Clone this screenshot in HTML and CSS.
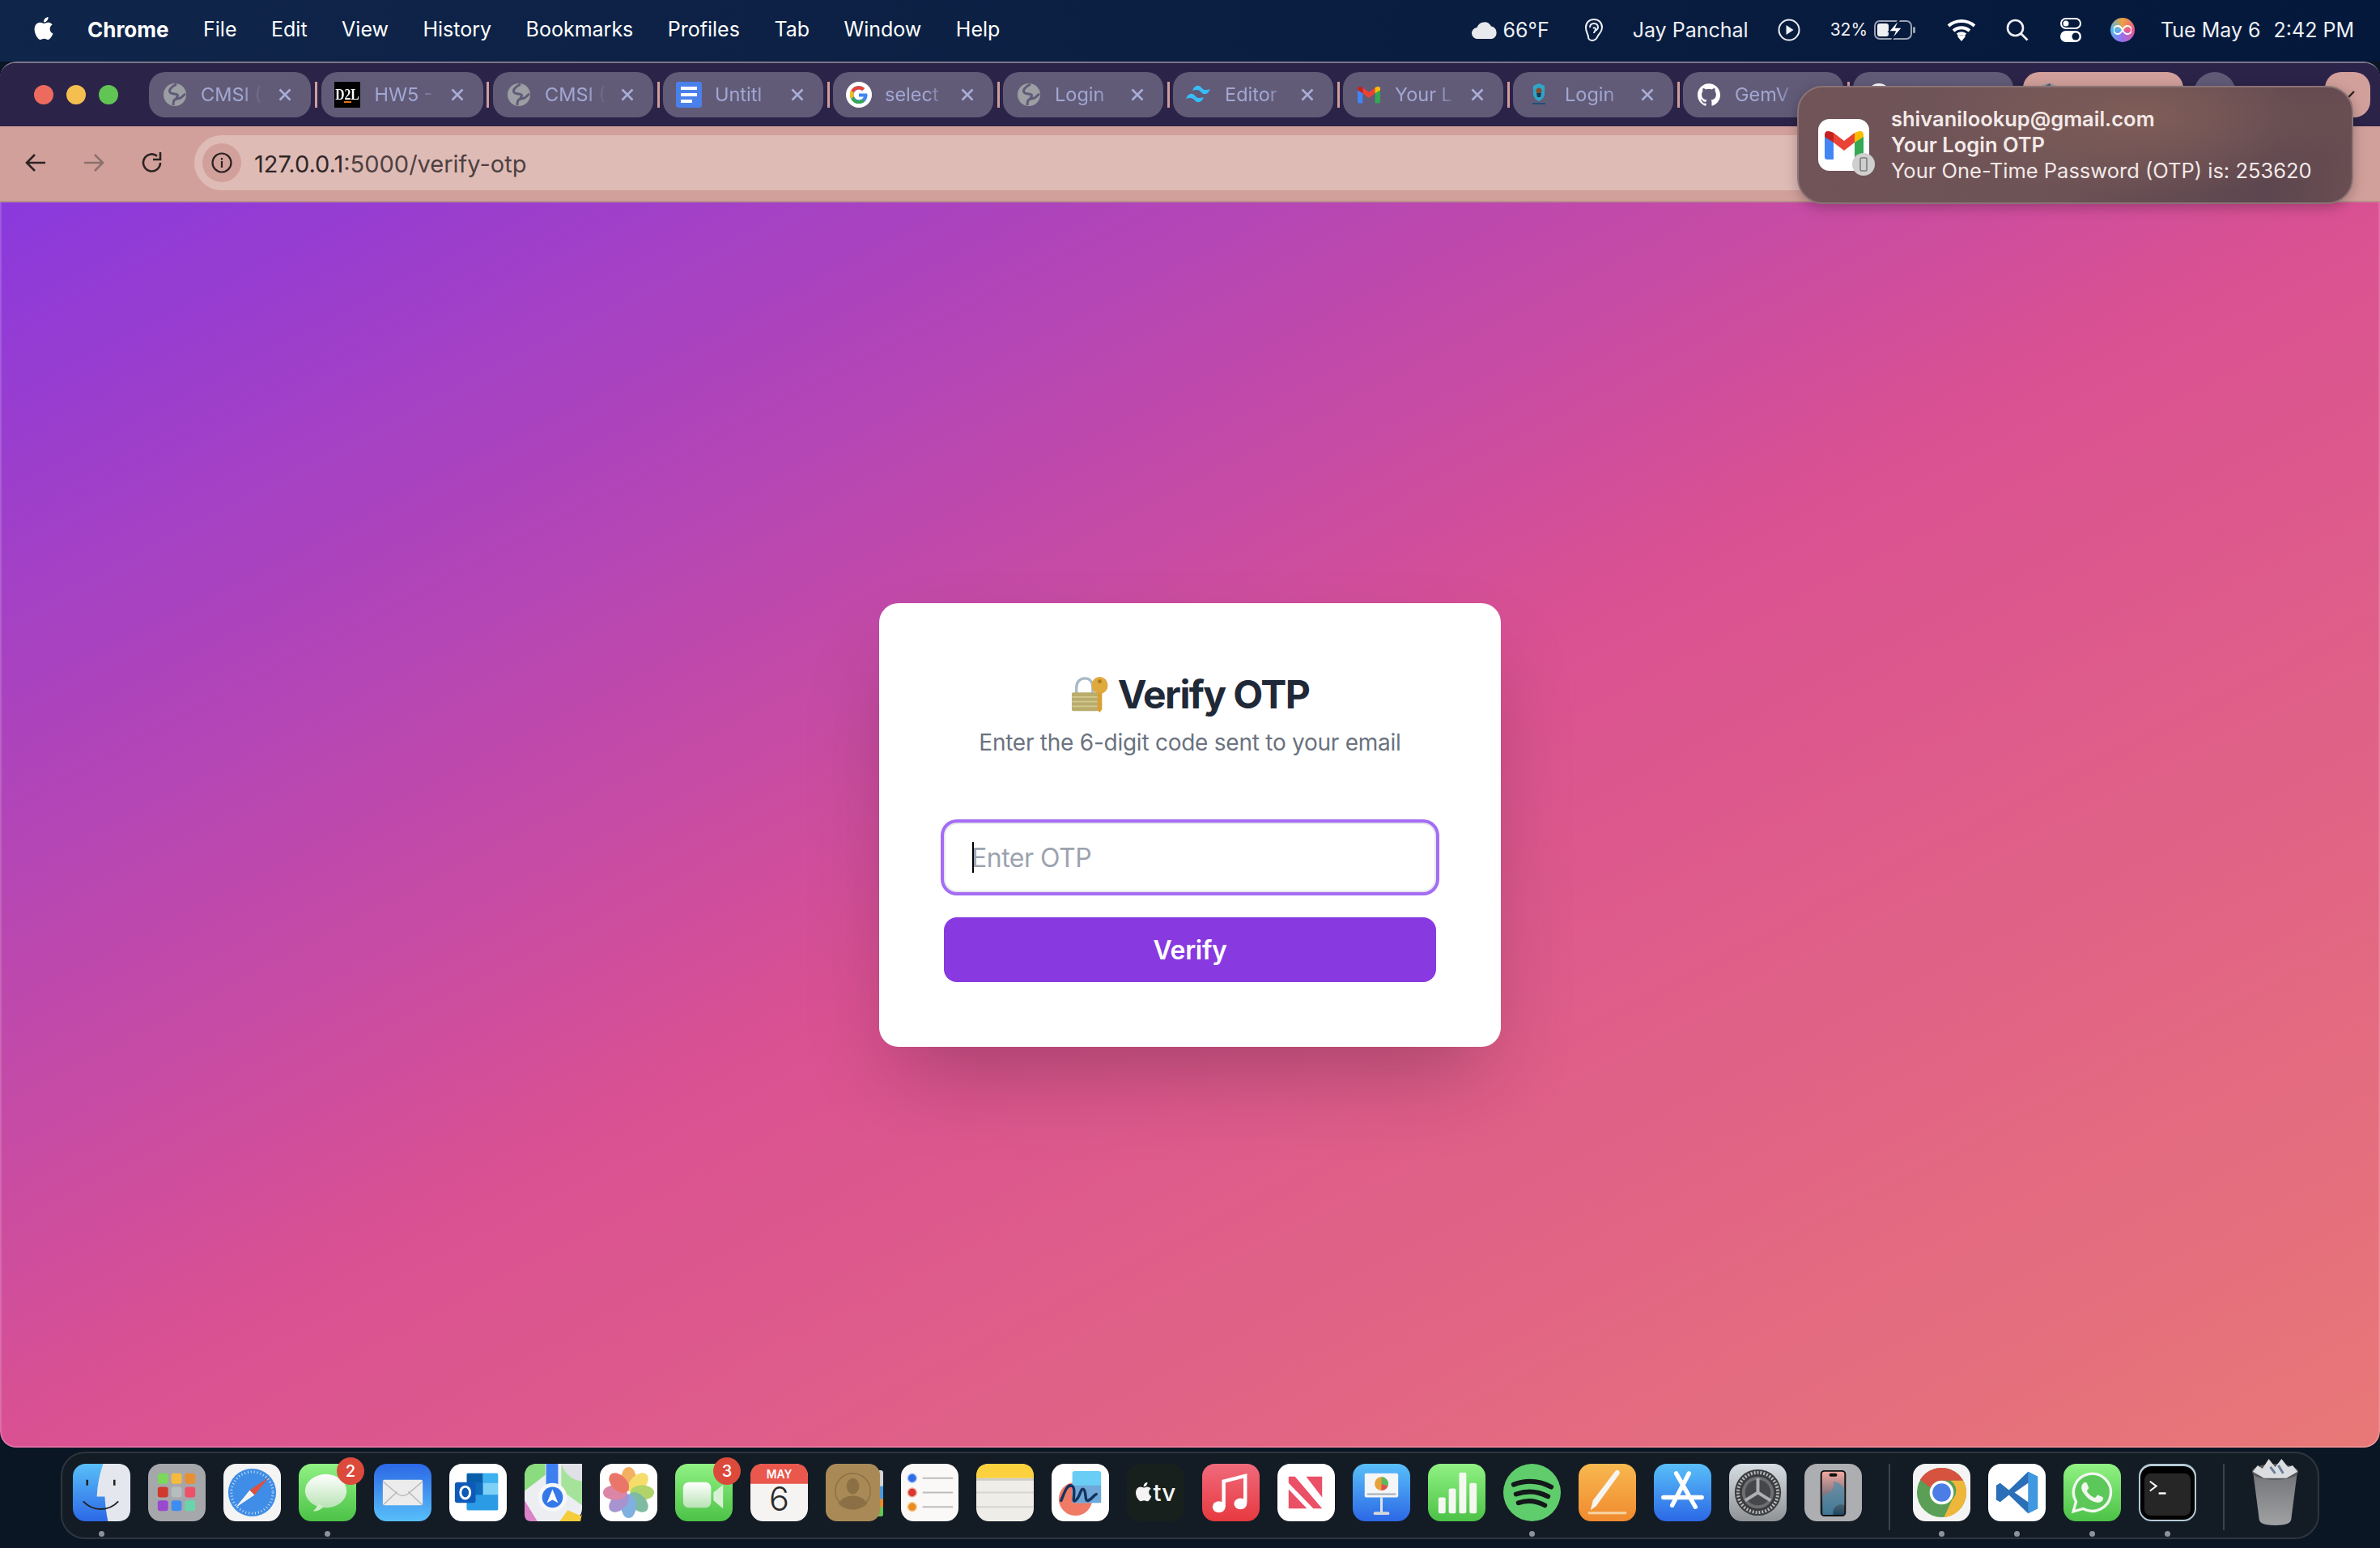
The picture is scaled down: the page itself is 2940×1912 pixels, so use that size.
FILE: index.html
```html
<!DOCTYPE html>
<html lang="en">
<head>
    <meta charset="UTF-8">
    <meta name="viewport" content="width=device-width, initial-scale=1.0">
    <title>Verify OTP</title>
    <link rel="stylesheet" href="styles.css">
</head>
<body>

    <svg class="sprite" aria-hidden="true">
        <symbol id="i-close" viewBox="0 0 16 16"><path d="M1.500 1.500l13 13M14.500 1.500l-13 13" fill="none" stroke="currentColor" stroke-width="2.600"/></symbol>
        <symbol id="i-globe" viewBox="0 0 28 28"><circle cx="14" cy="14" r="14" fill="#9b9ea2"/><path d="M16 1C10 4 6 8 8 11c2 3 7 1 9 3 2 2-2 3-1 5M27 13c-2 1-4 4-6 5-3 1-7 1-8 3-1 2-1 4-1 6" fill="none" stroke="#605a78" stroke-width="3"/></symbol>
        <symbol id="i-apple" viewBox="0 0 24 24"><path fill="currentColor" d="M12.152 6.896c-.948 0-2.415-1.078-3.960-1.040-2.040.027-3.910 1.183-4.961 3.014-2.117 3.675-.546 9.103 1.519 12.090 1.013 1.454 2.208 3.090 3.792 3.039 1.520-.065 2.090-.987 3.935-.987 1.831 0 2.350.987 3.960.948 1.637-.026 2.676-1.480 3.676-2.948 1.156-1.688 1.636-3.325 1.662-3.415-.039-.013-3.182-1.221-3.220-4.857-.026-3.040 2.480-4.494 2.597-4.559-1.429-2.090-3.623-2.324-4.390-2.376-2-.156-3.675 1.090-4.610 1.090zM15.530 3.830c.843-1.012 1.400-2.427 1.245-3.830-1.207.052-2.662.805-3.532 1.818-.78.896-1.454 2.338-1.273 3.714 1.338.104 2.715-.688 3.559-1.701"/></symbol>
        <symbol id="i-gmail" viewBox="0 0 48 36">
            <path d="M0 6v27q0 3 3 3h8V15z" fill="#4285f4"/>
            <path d="M48 6v27q0 3-3 3h-8V15z" fill="#34a853"/>
            <path d="M11 15L24 25 37 15V3L24 13 11 3z" fill="#ea4335"/>
            <path d="M0 6q0-5 4-5 3 0 7 2v12L0 8z" fill="#c5221f"/>
            <path d="M48 6q0-5-4-5-3 0-7 2v12l11-7z" fill="#fbbc04"/>
        </symbol>
        <linearGradient id="g-green" x1="0" y1="0" x2="0" y2="1"><stop offset="0" stop-color="#90f283"/><stop offset="1" stop-color="#4cc247"/></linearGradient>
        <linearGradient id="g-blue" x1="0" y1="0" x2="0" y2="1"><stop offset="0" stop-color="#58bff9"/><stop offset="1" stop-color="#2c68e6"/></linearGradient>
        <linearGradient id="g-blue-up" x1="0" y1="0" x2="0" y2="1"><stop offset="0" stop-color="#2c68e6"/><stop offset="1" stop-color="#58bff9"/></linearGradient>
        <linearGradient id="g-bubble" x1="0" y1="0" x2="0" y2="1"><stop offset="0" stop-color="#ffffff"/><stop offset="1" stop-color="#b9e3b5"/></linearGradient>
        <linearGradient id="g-pages" x1="0" y1="0" x2="0" y2="1"><stop offset="0" stop-color="#f8b84f"/><stop offset="1" stop-color="#f08a2e"/></linearGradient>
        <linearGradient id="g-music" x1="0" y1="0" x2="0" y2="1"><stop offset="0" stop-color="#f06a7c"/><stop offset="1" stop-color="#e7393f"/></linearGradient>
        <linearGradient id="g-gear" x1="0" y1="0" x2="0" y2="1"><stop offset="0" stop-color="#d6dde2"/><stop offset="1" stop-color="#8f9396"/></linearGradient>
        <linearGradient id="g-trash" x1="0" y1="0" x2="0" y2="1"><stop offset="0" stop-color="#707275"/><stop offset="1" stop-color="#a0a1a3"/></linearGradient>
        <linearGradient id="g-phone" x1="0" y1="0" x2="0" y2="1"><stop offset="0" stop-color="#f5a9a0"/><stop offset="1" stop-color="#17465f"/></linearGradient>
    </svg>

    <header class="menubar">
        <svg class="apple"><use href="#i-apple"/></svg>
        <nav class="menu-items">
            <span class="app-name">Chrome</span>
            <span>File</span>
            <span>Edit</span>
            <span>View</span>
            <span>History</span>
            <span>Bookmarks</span>
            <span>Profiles</span>
            <span>Tab</span>
            <span>Window</span>
            <span>Help</span>
        </nav>
        <div class="status-items">
            <span class="weather">
                <svg width="32" height="22" viewBox="0 0 32 22"><path d="M7.500 22a7 7 0 0 1-1-14 9.500 9.500 0 0 1 17.500-1.500A8 8 0 0 1 25 22z" fill="#e8e9ec"/></svg>
                66°F
            </span>
            <svg class="st-ear" width="24" height="30" viewBox="0 0 24 30" fill="none" stroke="#eef0f4" stroke-width="2"><path d="M2 12C2 6 6 2 12 2s10 4 10 10c0 5-3 7-5 10-1 2-2 6-7 6-3 0-5-2-5-4 0-4-3-6-3-12z"/><path d="M7 12c0-3 2-5 5-5s5 2 5 5c0 2-2 3-3 4M11 13c1-1 3-1 3 1 0 2-2 3-2 5"/></svg>
            <span class="st-user">Jay Panchal</span>
            <svg class="st-play" width="28" height="28" viewBox="0 0 28 28"><circle cx="14" cy="14" r="12.500" fill="none" stroke="#eef0f4" stroke-width="2"/><path d="M10.500 8l9 6-9 6z" fill="#eef0f4"/></svg>
            <span class="st-pct">32%</span>
            <svg class="st-batt" width="52" height="24" viewBox="0 0 52 24"><rect x="1" y="1" width="45" height="22" rx="6" fill="none" stroke="#9aa3b2" stroke-width="2"/><rect x="4" y="4" width="14" height="16" rx="3" fill="#eef0f4"/><rect x="48" y="8" width="3" height="8" rx="1.500" fill="#9aa3b2"/><path d="M30 0L18 14h8l-4 10 13-15h-8l4-9z" fill="#fff" stroke="#051a3d" stroke-width="1.500"/></svg>
            <svg class="st-wifi" width="36" height="28" viewBox="0 0 36 28" fill="none" stroke="#fff" stroke-width="4"><path d="M2 9c9-8 23-8 32 0M8 15c6-5 14-5 20 0M13 20c3-2 7-2 10 0"/><path d="M18 28l-5-6c3-2 7-2 10 0z" fill="#fff" stroke="none"/></svg>
            <svg class="st-search" width="28" height="28" viewBox="0 0 28 28" fill="none" stroke="#eef0f4" stroke-width="2.600"><circle cx="11.500" cy="11.500" r="9.500"/><path d="M18.500 18.500l8 8"/></svg>
            <svg class="st-ctrl" width="26" height="30" viewBox="0 0 26 30"><rect x="1" y="1" width="24" height="12" rx="6" fill="none" stroke="#fff" stroke-width="2"/><circle cx="7" cy="7" r="3.500" fill="#fff"/><rect y="16" width="26" height="14" rx="7" fill="#fff"/><circle cx="19" cy="23" r="4.500" fill="#051a3d"/></svg>
            <span class="st-siri"><svg width="22" height="14" viewBox="0 0 22 14" fill="none" stroke="#fff" stroke-width="1.800"><path d="M11 7C9 3 7 2 5 2a5 5 0 0 0 0 10c2 0 4-1 6-5s4-5 6-5a5 5 0 0 1 0 10c-2 0-4-1-6-5z"/></svg></span>
            <span class="st-date">Tue May 6</span>
            <span class="st-time">2:42 PM</span>
        </div>
    </header>

    <main class="window">
        <div class="tabbar">
            <div class="lights">
                <span class="light red"></span>
                <span class="light yellow"></span>
                <span class="light green"></span>
            </div>
            <div class="tabs">
                <div class="tab tab-wide"><svg class="favicon"><use href="#i-globe"/></svg><span class="tab-title">CMSI (</span><svg class="tab-close"><use href="#i-close"/></svg></div>
                <span class="tab-sep sep-wide"></span>
                <div class="tab tab-wide"><span class="favicon d2l"><span class="d2l-text">D2L</span></span><span class="tab-title">HW5 -</span><svg class="tab-close"><use href="#i-close"/></svg></div>
                <span class="tab-sep sep-wide"></span>
                <div class="tab"><svg class="favicon"><use href="#i-globe"/></svg><span class="tab-title">CMSI (</span><svg class="tab-close"><use href="#i-close"/></svg></div>
                <span class="tab-sep"></span>
                <div class="tab"><svg class="favicon favicon-lg" viewBox="0 0 32 32"><rect width="32" height="32" rx="3" fill="#4a80ea"/><path d="M6 6h20v4H6zM6 14h20v4H6zM6 22h14v4H6z" fill="#fff"/></svg><span class="tab-title">Untitl</span><svg class="tab-close"><use href="#i-close"/></svg></div>
                <span class="tab-sep"></span>
                <div class="tab"><svg class="favicon favicon-lg" viewBox="0 0 32 32"><circle cx="16" cy="16" r="16" fill="#fff"/><path d="M26 14.500H16v4h5.800c-.8 2.500-3 4-5.800 4a6.500 6.500 0 0 1 0-13c1.600 0 3 .6 4.100 1.500l3-3A11 11 0 0 0 16 5a11 11 0 0 0 0 22c6.300 0 10.500-4.400 10.500-10.700 0-.6-.2-1.200-.5-1.800z" fill="#4285f4"/><path d="M6.300 10.800L9.700 13.300A6.500 6.500 0 0 1 16 9.500c1.600 0 3 .6 4.100 1.500l3-3A11 11 0 0 0 6.300 10.800z" fill="#ea4335"/><path d="M16 27c2.900 0 5.500-1 7.400-2.700l-3.400-2.800a6.500 6.500 0 0 1-10.300-3L6.200 21A11 11 0 0 0 16 27z" fill="#34a853"/><path d="M9.700 13.300L6.300 10.800a11 11 0 0 0-.1 10.200l3.500-2.500a6.500 6.500 0 0 1 0-5.200z" fill="#fbbc04"/></svg><span class="tab-title">select</span><svg class="tab-close"><use href="#i-close"/></svg></div>
                <span class="tab-sep"></span>
                <div class="tab"><svg class="favicon"><use href="#i-globe"/></svg><span class="tab-title">Login</span><svg class="tab-close"><use href="#i-close"/></svg></div>
                <span class="tab-sep"></span>
                <div class="tab"><svg class="favicon favicon-lg" viewBox="0 0 32 32"><path d="M8 11c2-5 5-7 8-6 2 .5 3 2 4.500 3.500C22 10 24 11 30 9c-2 5-5 7-8 6-2-.5-3-2-4.500-3.500C16 10 14 9 8 11zM0 21c2-5 5-7 8-6 2 .5 3 2 4.500 3.500C14 20 16 21 22 19c-2 5-5 7-8 6-2-.5-3-2-4.500-3.500C8 20 6 19 0 21z" fill="#38bdf8"/></svg><span class="tab-title">Editor</span><svg class="tab-close"><use href="#i-close"/></svg></div>
                <span class="tab-sep"></span>
                <div class="tab"><svg class="favicon"><use href="#i-gmail"/></svg><span class="tab-title">Your L</span><svg class="tab-close"><use href="#i-close"/></svg></div>
                <span class="tab-sep"></span>
                <div class="tab"><svg class="favicon" viewBox="0 0 28 28"><path d="M14 0l7 3v9c0 5-3 8-7 10-4-2-7-5-7-10V3z" fill="#2ea6c9"/><circle cx="14" cy="9" r="3.500" fill="#8a4a2b"/><path d="M11 12h6l-1 5h-4z" fill="#123a5a"/><rect x="6" y="24" width="16" height="2" fill="#1d4f78"/></svg><span class="tab-title">Login</span><svg class="tab-close"><use href="#i-close"/></svg></div>
                <span class="tab-sep"></span>
                <div class="tab"><svg class="favicon" viewBox="0 0 24 24"><path fill="#fff" d="M12 .297c-6.630 0-12 5.373-12 12 0 5.303 3.438 9.800 8.205 11.385.6.113.82-.258.82-.577 0-.285-.01-1.040-.015-2.040-3.338.724-4.042-1.610-4.042-1.610C4.422 18.070 3.633 17.700 3.633 17.700c-1.087-.744.084-.729.084-.729 1.205.084 1.838 1.236 1.838 1.236 1.070 1.835 2.809 1.305 3.495.998.108-.776.417-1.305.76-1.605-2.665-.3-5.466-1.332-5.466-5.930 0-1.310.465-2.380 1.235-3.220-.135-.303-.54-1.523.105-3.176 0 0 1.005-.322 3.300 1.230.96-.267 1.980-.399 3-.405 1.020.006 2.040.138 3 .405 2.280-1.552 3.285-1.230 3.285-1.230.645 1.653.24 2.873.12 3.176.765.84 1.230 1.910 1.230 3.220 0 4.610-2.805 5.625-5.475 5.920.42.36.81 1.096.81 2.220 0 1.606-.015 2.896-.015 3.286 0 .315.21.69.825.57C20.565 22.092 24 17.592 24 12.297c0-6.627-5.373-12-12-12"/></svg><span class="tab-title">GemV</span><svg class="tab-close"><use href="#i-close"/></svg></div>
                <span class="tab-sep"></span>
                <div class="tab"><svg class="favicon" viewBox="0 0 28 28"><circle cx="14" cy="14" r="14" fill="#fff"/></svg></div>
                <span class="tab-sep hidden"></span>
                <div class="tab tab-active"><svg class="favicon"><use href="#i-globe"/></svg></div>
                <div class="tab-new"></div>
            </div>
            <div class="tab-menu">
                <svg width="20" height="12" viewBox="0 0 20 12" fill="none" stroke="#2b2322" stroke-width="2.400"><path d="M2 2l8 8 8-8"/></svg>
            </div>
        </div>

        <div class="toolbar">
            <svg class="nav-btn" viewBox="0 0 28 28" fill="none" stroke="#2b2322" stroke-width="2.600"><path d="M26 14H3M13 4L3 14l10 10"/></svg>
            <svg class="nav-btn" viewBox="0 0 28 28" fill="none" stroke="#8c706e" stroke-width="2.600"><path d="M2 14h23M15 4l10 10-10 10"/></svg>
            <svg class="nav-btn" viewBox="0 0 28 28" fill="none" stroke="#2b2322" stroke-width="2.600"><path d="M24 14a10.500 10.500 0 1 1-4-8.300"/><path d="M24 1v9h-9" stroke-width="2.600"/></svg>
            <div class="omnibox">
                <span class="info-chip">
                    <svg width="26" height="26" viewBox="0 0 26 26" fill="none" stroke="#2b2322" stroke-width="2.200"><circle cx="13" cy="13" r="11.500"/><path d="M13 11v8M13 7v2.400"/></svg>
                </span>
                <span class="url">127.0.0.1<span class="url-path">:5000/verify-otp</span></span>
            </div>
        </div>

        <section class="page">
            <div class="card">
                <h1 class="card-title">
                    <svg class="lock-key" width="46" height="46" viewBox="0 0 48 46">
                        <path d="M7 22V14C7 6 12 2 18 2s10 4 10 12v8" fill="none" stroke="#a9bac6" stroke-width="3.500"/>
                        <rect x="1" y="20" width="34" height="24" rx="2" fill="#b9ad6e"/>
                        <path d="M1 26h34M1 32h34M1 38h34" stroke="#d3c98f" stroke-width="2"/>
                        <ellipse cx="37" cy="11" rx="10.500" ry="11" fill="#e0a93e"/>
                        <circle cx="37" cy="6" r="2.500" fill="#a87a20"/>
                        <path d="M34 20h6v22l-3 4-3-3z" fill="#d99f37"/>
                    </svg>
                    Verify OTP
                </h1>
                <p class="card-sub">Enter the 6-digit code sent to your email</p>
                <div class="otp-field">
                    <input class="otp-input" type="text" placeholder="Enter OTP">
                    <span class="caret"></span>
                </div>
                <button class="verify-btn">Verify</button>
            </div>
        </section>
    </main>

    <aside class="notification">
        <div class="notif-icon">
            <svg width="48" height="36"><use href="#i-gmail"/></svg>
            <span class="notif-device"><svg width="10" height="18" viewBox="0 0 10 18" fill="none" stroke="#7e7e7e" stroke-width="1.600"><rect x="1" y="1" width="8" height="16" rx="1.500"/></svg></span>
        </div>
        <div class="notif-text">
            <div class="notif-strong">shivanilookup@gmail.com</div>
            <div class="notif-strong">Your Login OTP</div>
            <div>Your One-Time Password (OTP) is: 253620</div>
        </div>
    </aside>

    <footer class="dock-area">
        <div class="dock">
            <div class="dock-item running"><svg viewBox="0 0 72 72"><rect width="72" height="72" rx="16" fill="url(#g-blue)"/><path d="M38 0Q31 20 30 41H40Q41 58 44 72H56Q72 72 72 56V16Q72 0 56 0z" fill="#e4e8ee"/><path d="M18 20v7M52 20v7" stroke="#222" stroke-width="2.600"/><path d="M13 47c12 13 32 13 44 0" fill="none" stroke="#222" stroke-width="2"/></svg></div>
            <div class="dock-item"><svg viewBox="0 0 72 72"><rect width="72" height="72" rx="16" fill="#a6a7ab"/><rect x="12" y="12" width="13" height="13" rx="3" fill="#7ad95a"/><rect x="29" y="12" width="13" height="13" rx="3" fill="#f6bb3c"/><rect x="46" y="12" width="13" height="13" rx="3" fill="#ea8f31"/><rect x="12" y="29" width="13" height="13" rx="3" fill="#d0392c"/><rect x="29" y="29" width="13" height="13" rx="3" fill="#b7bcbf"/><rect x="46" y="29" width="13" height="13" rx="3" fill="#ec5169"/><rect x="12" y="46" width="13" height="13" rx="3" fill="#9a48cf"/><rect x="29" y="46" width="13" height="13" rx="3" fill="#3f8cf0"/><rect x="46" y="46" width="13" height="13" rx="3" fill="#68d5ac"/></svg></div>
            <div class="dock-item"><svg viewBox="0 0 72 72"><rect width="72" height="72" rx="16" fill="#f4f4f4"/><circle cx="36" cy="36" r="30" fill="#3f8de6"/><circle cx="36" cy="36" r="26" fill="none" stroke="#cfe3f8" stroke-width="3" stroke-dasharray="1 3"/><path d="M15 55L33 33 39 39z" fill="#f4f4f4"/><path d="M57 17L33 33 39 39z" fill="#e0503f"/></svg></div>
            <div class="dock-item running"><svg viewBox="0 0 72 72"><rect width="72" height="72" rx="16" fill="url(#g-green)"/><ellipse cx="34" cy="34" rx="26" ry="21" fill="url(#g-bubble)"/><path d="M24 50c-1 4-3 7-6 9 5 1 10-1 13-6z" fill="#cfeccb"/></svg><span class="dock-badge">2</span></div>
            <div class="dock-item"><svg viewBox="0 0 72 72"><rect width="72" height="72" rx="16" fill="url(#g-blue-up)"/><rect x="11" y="20" width="50" height="32" rx="2" fill="#ececec"/><path d="M11 22L30 38q6 4 12 0L61 22M11 52l18-17M61 52L43 35" fill="none" stroke="#b4b6b8" stroke-width="1.400"/></svg></div>
            <div class="dock-item"><svg viewBox="0 0 72 72"><rect width="72" height="72" rx="16" fill="#fff"/><rect x="22" y="12" width="39" height="46" rx="2" fill="#1490df"/><rect x="22" y="12" width="20" height="12" fill="#0a5da8"/><rect x="42" y="12" width="19" height="12" fill="#3db0f0"/><rect x="42" y="24" width="19" height="15" fill="#7fd0f7"/><rect x="22" y="24" width="20" height="15" fill="#0f6cbd"/><path d="M22 39h39v19H22z" fill="#2b9be5"/><rect x="7" y="23" width="26" height="26" rx="3" fill="#0f5ab8"/><ellipse cx="20" cy="36" rx="6" ry="7.500" fill="none" stroke="#fff" stroke-width="3"/></svg></div>
            <div class="dock-item"><svg viewBox="0 0 72 72"><rect width="72" height="72" rx="16" fill="#eceef2"/><path d="M0 16q0-16 16-16h10v14L0 34z" fill="#8bdb7f"/><path d="M46 0h10q16 0 16 16v36L50 36l-4-4z" fill="#a5e39a"/><path d="M46 0c4 12 12 20 26 22V0z" fill="#dfe1e6"/><rect x="27" y="0" width="15" height="36" fill="#3c7ff0"/><path d="M0 46l16 26H8q-8 0-8-8z" fill="#dc82c8"/><path d="M44 72l10-14 18 8v-4l-2 10z" fill="#f5cc3b"/><circle cx="35" cy="42" r="18" fill="#f6f7f9"/><circle cx="35" cy="42" r="13" fill="#3478ea"/><path d="M35 32l7 17-7-4-7 4z" fill="#fff"/></svg></div>
            <div class="dock-item"><svg viewBox="0 0 72 72"><rect width="72" height="72" rx="16" fill="#fff"/><g opacity=".78"><ellipse cx="36" cy="19" rx="9.500" ry="15" fill="#f09a36"/><ellipse cx="36" cy="19" rx="9.500" ry="15" fill="#f4d440" transform="rotate(45 36 36)"/><ellipse cx="36" cy="19" rx="9.500" ry="15" fill="#9bc93f" transform="rotate(90 36 36)"/><ellipse cx="36" cy="19" rx="9.500" ry="15" fill="#5ca98a" transform="rotate(135 36 36)"/><ellipse cx="36" cy="19" rx="9.500" ry="15" fill="#5c9ad8" transform="rotate(180 36 36)"/><ellipse cx="36" cy="19" rx="9.500" ry="15" fill="#8e76c4" transform="rotate(225 36 36)"/><ellipse cx="36" cy="19" rx="9.500" ry="15" fill="#d2648f" transform="rotate(270 36 36)"/><ellipse cx="36" cy="19" rx="9.500" ry="15" fill="#e4503f" transform="rotate(315 36 36)"/></g></svg></div>
            <div class="dock-item"><svg viewBox="0 0 72 72"><rect width="72" height="72" rx="16" fill="url(#g-green)"/><rect x="10" y="23" width="35" height="32" rx="7" fill="url(#g-bubble)"/><path d="M48 36l12-10v30L48 46z" fill="#d6f1d3"/></svg><span class="dock-badge">3</span></div>
            <div class="dock-item"><svg viewBox="0 0 72 72"><rect width="72" height="72" rx="16" fill="#f5f4f2"/><path d="M0 25V16Q0 0 16 0h40q16 0 16 16v9z" fill="#e9574d"/><text x="36" y="18" class="cal-month">MAY</text><text x="36" y="59" class="cal-day">6</text></svg></div>
            <div class="dock-item"><svg viewBox="0 0 72 72"><rect x="60" y="8" width="12" height="24" rx="3" fill="#d6d6d6"/><rect x="60" y="28" width="12" height="18" fill="#4a9be0"/><rect x="60" y="44" width="12" height="12" fill="#ec8a2a"/><rect x="60" y="54" width="12" height="12" rx="3" fill="#63c655"/><rect width="68" height="72" rx="14" fill="#a98a57"/><circle cx="34" cy="34" r="22" fill="none" stroke="#8c7045" stroke-width="1.500"/><ellipse cx="34" cy="28" rx="8" ry="10" fill="#8c7045"/><path d="M16 50c4-8 12-10 18-10s14 2 18 10c-10 10-26 10-36 0z" fill="#8c7045"/></svg></div>
            <div class="dock-item"><svg viewBox="0 0 72 72"><rect width="72" height="72" rx="16" fill="#faf9f7"/><circle cx="14" cy="18" r="5.500" fill="#2e6be6" stroke="#9cbcf5" stroke-width="1.500"/><circle cx="14" cy="36" r="5.500" fill="#d8382f" stroke="#f0a7a0" stroke-width="1.500"/><circle cx="14" cy="54" r="5.500" fill="#ea8c23" stroke="#f6c88c" stroke-width="1.500"/><path d="M27 18h38M27 36h38M27 54h38" stroke="#bdbdbd" stroke-width="2"/></svg></div>
            <div class="dock-item"><svg viewBox="0 0 72 72"><rect width="72" height="72" rx="16" fill="#efede8"/><path d="M0 18V16Q0 0 16 0h40q16 0 16 16v2z" fill="#fbd13e"/><path d="M0 18h72v3H0z" fill="#cfcdc7"/><path d="M0 36h72M0 54h72" stroke="#d8d6d0" stroke-width="2"/></svg></div>
            <div class="dock-item"><svg viewBox="0 0 72 72"><rect width="72" height="72" rx="16" fill="#fff"/><circle cx="30" cy="44" r="21" fill="#ef7a66"/><rect x="26" y="9" width="36" height="40" rx="3" fill="#69cdf6"/><path d="M26 27h36v22H26z" fill="#6fa8d8"/><path d="M12 46c4-10 8-22 14-18s-2 22 4 18 6-16 10-14 1 16 6 14 6-6 10-8" fill="none" stroke="#14335e" stroke-width="3.500" stroke-linecap="round"/></svg></div>
            <div class="dock-item"><svg viewBox="0 0 72 72"><rect width="72" height="72" rx="16" fill="#18201d"/><svg x="9" y="20" width="24" height="30"><use href="#i-apple" color="#f4f4f4"/></svg><text x="33" y="47" class="tv-text">tv</text></svg></div>
            <div class="dock-item"><svg viewBox="0 0 72 72"><rect width="72" height="72" rx="16" fill="url(#g-music)"/><path d="M27 22l27-7v34" fill="none" stroke="#fff" stroke-width="4.500"/><path d="M27 20v34" stroke="#fff" stroke-width="4.500"/><ellipse cx="21" cy="54" rx="8" ry="7" fill="#fff"/><ellipse cx="48" cy="50" rx="8" ry="7" fill="#fff"/></svg></div>
            <div class="dock-item"><svg viewBox="0 0 72 72"><rect width="72" height="72" rx="16" fill="#fff"/><path d="M14 16h8l34 40H45L14 24zM14 32l23 24H14zM36 16h20v26z" fill="#ea5066"/></svg></div>
            <div class="dock-item"><svg viewBox="0 0 72 72"><rect width="72" height="72" rx="16" fill="url(#g-blue)"/><rect x="15" y="12" width="42" height="30" rx="2" fill="#f3f5f7"/><circle cx="36" cy="25" r="8.500" fill="#e6a23c"/><path d="M36 25V16.500A8.500 8.500 0 0 1 44 28z" fill="#5cb85c"/><path d="M36 25l8 3a8.500 8.500 0 0 1-8 5.500z" fill="#d9534f"/><rect x="18" y="37" width="36" height="2" fill="#a4acb5"/><rect x="34.500" y="42" width="3" height="20" fill="#dfe3e6"/><rect x="26" y="60" width="20" height="4" rx="2" fill="#d4d8db"/></svg></div>
            <div class="dock-item"><svg viewBox="0 0 72 72"><rect width="72" height="72" rx="16" fill="url(#g-green)"/><rect x="13" y="42" width="9" height="20" rx="2" fill="#f4f8f1"/><rect x="26" y="31" width="9" height="31" rx="2" fill="#f4f8f1"/><rect x="39" y="11" width="9" height="51" rx="2" fill="#f4f8f1"/><rect x="52" y="24" width="9" height="38" rx="2" fill="#f4f8f1"/></svg></div>
            <div class="dock-item running"><svg viewBox="0 0 72 72"><circle cx="36" cy="36" r="36" fill="#5fcd6c"/><path d="M13 26c16-6 32-5 47 3M16 38c14-5 27-4 40 3M19 49c11-4 22-3 33 3" fill="none" stroke="#13191a" stroke-width="6" stroke-linecap="round"/></svg></div>
            <div class="dock-item"><svg viewBox="0 0 72 72"><rect width="72" height="72" rx="16" fill="url(#g-pages)"/><path d="M15 58l3-12 28-37c3-3 7 1 5 4L22 53z" fill="#f7f5f1"/><path d="M12 60h48v3H12z" fill="#f7d5a6"/></svg></div>
            <div class="dock-item"><svg viewBox="0 0 72 72"><rect width="72" height="72" rx="16" fill="url(#g-blue)"/><path d="M28 12l24 42M44 12L23 52M12 42h48" stroke="#fff" stroke-width="5.500" stroke-linecap="round" fill="none"/></svg></div>
            <div class="dock-item"><svg viewBox="0 0 72 72"><rect width="72" height="72" rx="16" fill="url(#g-gear)"/><circle cx="36" cy="36" r="29" fill="#3b3c3e"/><circle cx="36" cy="36" r="25" fill="none" stroke="#b7babd" stroke-width="4" stroke-dasharray="2 2"/><circle cx="36" cy="36" r="20" fill="#6c6e70"/><circle cx="36" cy="36" r="16" fill="#46474a"/><path d="M36 36V18M36 36L20 46M36 36l16 10" stroke="#aeb1b4" stroke-width="4"/></svg></div>
            <div class="dock-item"><svg viewBox="0 0 72 72"><rect width="72" height="72" rx="16" fill="#adaeb1"/><rect x="21" y="9" width="30" height="56" rx="4" fill="url(#g-phone)" stroke="#111" stroke-width="2"/><path d="M36 22c12 2 14 10 14 10v20c-8-4-16 4-14 12H23V40c8-4 16-6 13-18z" fill="#4f8dab" opacity=".7"/><rect x="31" y="12" width="10" height="4" rx="2" fill="#111"/></svg></div>
            <span class="dock-sep sep-apps"></span>
            <div class="dock-item running"><svg viewBox="0 0 72 72"><rect width="72" height="72" rx="16" fill="#f4f4f4"/><circle cx="36" cy="36" r="31" fill="#5a9f55"/><path d="M36 5a31 31 0 0 1 27 16H36A15 15 0 0 0 22 30L9 20A31 31 0 0 1 36 5z" fill="#d65340"/><path d="M63 21a31 31 0 0 1-24 46l10-22a15 15 0 0 0-2-24z" fill="#eeb73c"/><circle cx="36" cy="36" r="15" fill="#fff"/><circle cx="36" cy="36" r="11.500" fill="#4a7ee6"/></svg></div>
            <div class="dock-item running"><svg viewBox="0 0 72 72"><rect width="72" height="72" rx="16" fill="#fff"/><path d="M50 10l12 6v40l-12 6-24-23-11 9-5-3V27l5-3 11 9z" fill="#2b6fb8"/><path d="M50 10l12 6v40l-12 6z" fill="#3f98e0"/><path d="M50 24L33 36l17 12z" fill="#fff"/></svg></div>
            <div class="dock-item running"><svg viewBox="0 0 72 72"><rect width="72" height="72" rx="16" fill="url(#g-green)"/><g transform="translate(9 9) scale(2.250)"><path d="M1.500 22.500l1.500-5.400A10.400 10.400 0 1 1 7 21z" fill="#5cc859" stroke="#f2f7ef" stroke-width="1.500"/><path fill="#f2f7ef" d="M17.472 14.382c-.297-.149-1.758-.867-2.030-.967-.273-.099-.471-.148-.67.15-.197.297-.767.966-.94 1.164-.173.199-.347.223-.644.075-.297-.15-1.255-.463-2.390-1.475-.883-.788-1.480-1.761-1.653-2.059-.173-.297-.018-.458.13-.606.134-.133.298-.347.446-.52.149-.174.198-.298.298-.497.099-.198.05-.371-.025-.52-.075-.149-.669-1.612-.916-2.207-.242-.579-.487-.5-.669-.51-.173-.008-.371-.01-.57-.01-.198 0-.52.074-.792.372-.272.297-1.040 1.016-1.040 2.479 0 1.462 1.065 2.875 1.213 3.074.149.198 2.096 3.200 5.077 4.487.709.306 1.262.489 1.694.625.712.227 1.360.195 1.871.118.571-.085 1.758-.719 2.006-1.413.248-.694.248-1.289.173-1.413-.074-.124-.272-.198-.57-.347z"/></g></svg></div>
            <div class="dock-item running"><svg viewBox="0 0 72 72"><rect width="72" height="72" rx="16" fill="#b3cad6"/><rect x="2" y="3" width="68" height="67" rx="14" fill="#000"/><rect x="7" y="12" width="58" height="53" rx="8" fill="#262626"/><path d="M14 22l8 6-8 6" fill="none" stroke="#fff" stroke-width="2"/><path d="M25 37h9" stroke="#fff" stroke-width="2.500"/></svg></div>
            <span class="dock-sep sep-trash"></span>
            <div class="dock-item trash"><svg viewBox="0 0 72 84"><path d="M8 14L16 76q1 7 20 7t20-7l8-62z" fill="url(#g-trash)"/><ellipse cx="36" cy="16" rx="29" ry="10" fill="#565759"/><path d="M8 16l6-8 6 4 8-12 8 10 8-10 8 10 6-2 6 8-14 8H22z" fill="#dcdde0"/><path d="M30 10l6 8M40 8l6 10" stroke="#6c7f9a" stroke-width="3"/></svg></div>
        </div>
    </footer>

</body>
</html>
```

FILE: styles.css
```css
* {
    box-sizing: border-box;
}
html, body {
    margin: 0;
    height: 100%;
}
body {
    position: relative;
    width: 2940px;
    height: 1912px;
    overflow: hidden;
    display: flex;
    flex-direction: column;
    background-color: #0a1624;
    font-family: 'Inter', 'Liberation Sans', sans-serif;
}
.sprite {
    position: absolute;
    width: 0;
    height: 0;
}

/* menu bar */
.menubar {
    height: 76px;
    flex: none;
    display: flex;
    align-items: center;
    padding-left: 40px;
    padding-bottom: 3px;
    background: linear-gradient(to right, #10254a, #0a1f42 50%, #04183c);
    color: #fff;
    font-size: 25px;
}
.apple {
    width: 28px;
    height: 32px;
    margin-top: -3px;
    color: #fff;
}
.menu-items {
    display: flex;
    gap: 42.5px;
    margin-left: 40px;
}
.app-name {
    font-size: 26px;
    font-weight: 700;
}
.status-items {
    display: flex;
    align-items: center;
    margin-left: auto;
    padding-right: 32px;
    color: #eef0f4;
    font-size: 25px;
}
.weather {
    display: flex;
    align-items: center;
    gap: 7px;
}
.st-ear {
    margin-left: 43px;
}
.st-user {
    margin-left: 36px;
}
.st-play {
    margin-left: 36px;
}
.st-pct {
    margin-left: 37px;
    font-size: 21px;
}
.st-batt {
    margin-left: 8px;
}
.st-wifi {
    margin-left: 38px;
}
.st-search {
    margin-left: 37px;
}
.st-ctrl {
    margin-left: 39px;
}
.st-siri {
    width: 30px;
    height: 30px;
    margin-left: 36px;
    display: flex;
    align-items: center;
    justify-content: center;
    border-radius: 50%;
    background: conic-gradient(#f0a03c, #e85a8c, #9a6cf0, #4fb6f0, #f0a03c);
}
.st-date {
    margin-left: 32px;
}
.st-time {
    margin-left: 16px;
}

/* browser window */
.window {
    height: 1712px;
    flex: none;
    display: flex;
    flex-direction: column;
    overflow: hidden;
    border-top: 2px solid #7a7587;
    border-radius: 20px;
    background-color: #2c2349;
}
.tabbar {
    height: 78px;
    flex: none;
    display: flex;
    align-items: center;
    background-color: #2c2349;
}
.lights {
    display: flex;
    gap: 16px;
    margin-left: 42px;
}
.light {
    width: 24px;
    height: 24px;
    border-radius: 50%;
}
.light.red { background-color: #ed6a5e; }
.light.yellow { background-color: #f4bf4f; }
.light.green { background-color: #61c554; }
.tabs {
    display: flex;
    align-items: center;
    margin-left: 38px;
}
.tab {
    width: 198px;
    height: 56px;
    flex: none;
    display: flex;
    align-items: center;
    padding-left: 18px;
    border-radius: 20px;
    background-color: #615b78;
    color: #a2a7d2;
    font-size: 23.5px;
}
.tab-wide {
    width: 200px;
}
.tab-sep {
    width: 3px;
    height: 32px;
    margin: 0 4.5px;
    flex: none;
    background-color: #d09f9b;
}
.sep-wide {
    margin: 0 4.75px;
}
.tab-sep.hidden {
    background-color: transparent;
}
.tab-active {
    background-color: #d2a09b;
}
.tab-new {
    width: 52px;
    height: 56px;
    margin-left: 13px;
    border-radius: 26px;
    background-color: #615b78;
}
.tab-menu {
    width: 56px;
    height: 56px;
    display: flex;
    align-items: center;
    justify-content: center;
    margin-left: auto;
    margin-right: 12px;
    border-radius: 20px;
    background-color: #d2a09b;
}
.favicon {
    width: 28px;
    height: 28px;
    flex: none;
}
.favicon-lg {
    width: 32px;
    height: 32px;
    margin: 0 -2px;
}
.d2l {
    display: flex;
    justify-content: center;
    position: relative;
    width: 32px;
    height: 32px;
    margin-left: -2px;
    background-color: #000;
    color: #fff;
    font-family: 'Liberation Serif', serif;
    font-size: 19px;
    font-weight: 700;
    line-height: 31px;
}
.d2l-text {
    display: inline-block;
    transform: scaleX(0.82);
}
.d2l::after {
    content: '';
    position: absolute;
    left: 12px;
    bottom: 6px;
    width: 9px;
    height: 2px;
    background-color: #e8701a;
}
.tab-title {
    width: 76px;
    margin-left: 18px;
    margin-top: -2px;
    flex: none;
    white-space: nowrap;
    -webkit-mask-image: linear-gradient(to right, #000 70%, rgba(0, 0, 0, 0.15) 95%);
    mask-image: linear-gradient(to right, #000 70%, rgba(0, 0, 0, 0.15) 95%);
}
.tab-close {
    width: 16px;
    height: 16px;
    margin-left: auto;
    margin-right: 24px;
    color: #a9add6;
}

/* toolbar */
.toolbar {
    height: 94px;
    flex: none;
    display: flex;
    align-items: center;
    padding-left: 30px;
    padding-right: 80px;
    padding-bottom: 2px;
    background-color: #d2a09b;
    border-bottom: 2px solid #b98f8c;
}
.nav-btn {
    width: 28px;
    height: 28px;
    margin-right: 44px;
    flex: none;
}
.omnibox {
    height: 68px;
    flex: 1;
    display: flex;
    align-items: center;
    margin-left: -6px;
    padding-left: 10px;
    border-radius: 34px;
    background-color: #dfbbb6;
}
.info-chip {
    width: 48px;
    height: 48px;
    display: flex;
    align-items: center;
    justify-content: center;
    border-radius: 50%;
    background-color: #d2a09b;
}
.url {
    margin-left: 16px;
    padding-top: 2px;
    color: #2e2626;
    font-size: 29px;
}
.url-path {
    color: #4d4141;
}

/* page with the form */
.page {
    flex: 1;
    display: flex;
    align-items: center;
    justify-content: center;
    background: linear-gradient(to bottom right, #8a39dd, #da5192 50%, #e87877);
    box-shadow: inset 2px 0 0 rgba(255, 255, 255, 0.16), inset -2px 0 0 rgba(255, 255, 255, 0.16), inset 0 -2px 0 rgba(255, 255, 255, 0.16);
    border-radius: 0 0 20px 20px;
}
.card {
    width: 768px;
    padding: 80px;
    background-color: #fff;
    border-radius: 24px;
    text-align: center;
    box-shadow: 0 50px 100px -24px rgba(0, 0, 0, 0.25);
}
.card-title {
    display: flex;
    align-items: center;
    justify-content: center;
    gap: 12px;
    margin: 0;
    color: #1f2937;
    font-size: 48px;
    font-weight: 700;
    letter-spacing: -1.6px;
    line-height: 66px;
}
.card-sub {
    margin: 6px 0 79px;
    color: #6b7280;
    font-size: 28px;
    letter-spacing: -0.25px;
    line-height: 40px;
}
.otp-field {
    position: relative;
}
.otp-input {
    display: block;
    width: 100%;
    height: 86px;
    padding: 0 32px;
    border: 2px solid #e5e7eb;
    border-radius: 16px;
    outline: none;
    box-shadow: 0 0 0 4px #a56cf5;
    color: #1f2937;
    font-family: inherit;
    font-size: 32px;
    letter-spacing: -0.5px;
}
.otp-input::placeholder {
    color: #9ca3af;
    opacity: 1;
}
.caret {
    position: absolute;
    left: 35px;
    top: 24px;
    width: 2px;
    height: 38px;
    background-color: #000;
}
.verify-btn {
    display: block;
    width: 100%;
    height: 80px;
    margin-top: 31px;
    border: none;
    border-radius: 16px;
    background-color: #8839e0;
    color: #fff;
    font-family: inherit;
    font-size: 32px;
    font-weight: 600;
    letter-spacing: -0.3px;
    cursor: pointer;
}

/* notification */
.notification {
    position: absolute;
    top: 106px;
    right: 33px;
    width: 687px;
    height: 146px;
    display: flex;
    align-items: center;
    padding-left: 24px;
    border: 2px solid #8a7375;
    border-radius: 32px;
    background: radial-gradient(ellipse 40% 70% at 62% 25%, #7f5d58, rgba(127, 93, 88, 0)), linear-gradient(100deg, #705458, #6e5356 45%, #5d464f 85%, #6a4e52);
    box-shadow: 0 4px 16px rgba(0, 0, 0, 0.25);
    color: #f3e9e7;
    font-size: 25.5px;
    line-height: 32px;
}
.notif-icon {
    position: relative;
    width: 63px;
    height: 64px;
    flex: none;
    display: flex;
    align-items: center;
    justify-content: center;
    border-radius: 14px;
    background-color: #fff;
}
.notif-device {
    position: absolute;
    right: -7px;
    bottom: -6px;
    width: 28px;
    height: 28px;
    display: flex;
    align-items: center;
    justify-content: center;
    border-radius: 50%;
    background-color: #cfcfcf;
}
.notif-text {
    margin-left: 27px;
    white-space: nowrap;
}
.notif-strong {
    font-weight: 600;
}

/* dock */
.dock-area {
    flex: 1;
    background-color: #0a1624;
    padding-top: 5px;
    display: flex;
    justify-content: center;
}
.dock {
    width: 2790px;
    height: 108px;
    display: flex;
    align-items: flex-start;
    gap: 22px;
    padding: 13px 0 0 13px;
    border: 2px solid #2e353d;
    border-radius: 30px;
    background-color: #131b25;
}
.dock-item {
    position: relative;
    width: 71px;
    height: 71px;
    flex: none;
}
.dock-item > svg {
    display: block;
    width: 71px;
    height: 71px;
}
.dock-item.running::after {
    content: '';
    position: absolute;
    left: 32px;
    bottom: -19px;
    width: 7px;
    height: 7px;
    border-radius: 50%;
    background-color: #8e939b;
}
.dock-item.trash > svg {
    height: 83px;
    margin-top: -6px;
}
.dock-badge {
    position: absolute;
    top: -8px;
    right: -10px;
    width: 34px;
    height: 34px;
    border-radius: 50%;
    background-color: #dc4a3c;
    color: #fff;
    font-size: 20px;
    font-weight: 500;
    line-height: 34px;
    text-align: center;
}
.dock-sep {
    width: 2px;
    height: 82px;
    flex: none;
    background-color: #3c434b;
}
.sep-apps {
    margin: 0 6px 0 11px;
}
.sep-trash {
    margin: 0 5px 0 11px;
}
.cal-month {
    fill: #fff;
    font-size: 14px;
    font-weight: 600;
    text-anchor: middle;
}
.cal-day {
    fill: #2a2a2a;
    font-size: 42px;
    font-weight: 300;
    text-anchor: middle;
}
.tv-text {
    fill: #f4f4f4;
    font-size: 30px;
    font-weight: 500;
}
```
